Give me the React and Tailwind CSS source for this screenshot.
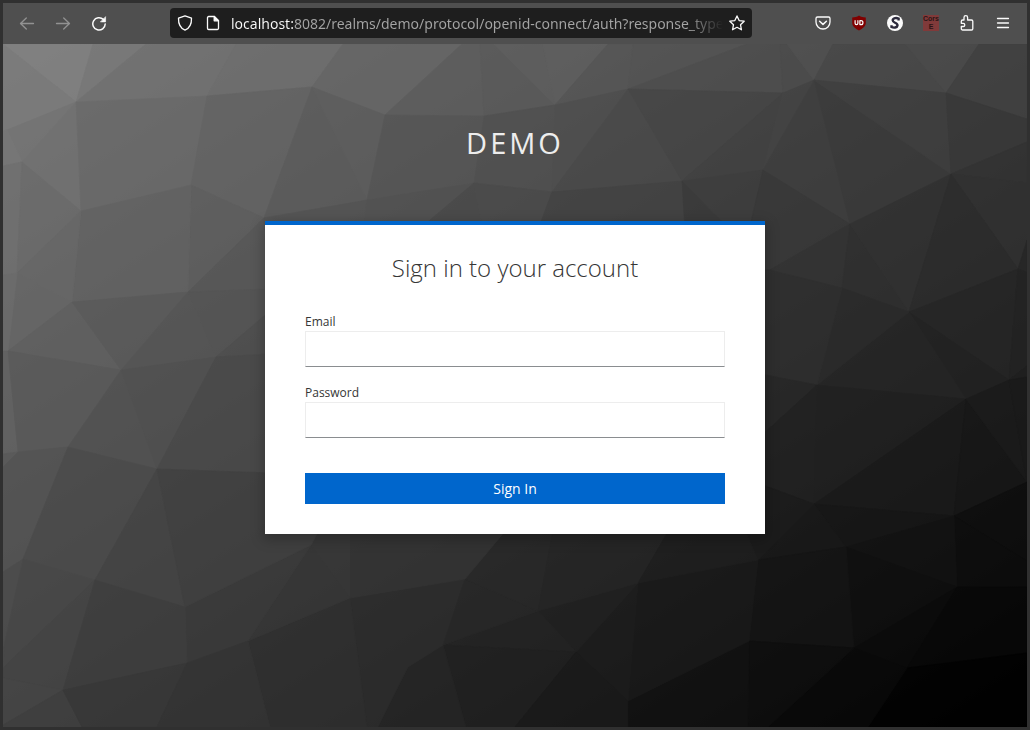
import React, { useState } from "react";

const FACETS = [
  ["3,44 93,44 76,102", "#808080"],
  ["3,44 76,102 7,130 3,131", "#7a7a7a"],
  ["93,44 146,44 76,102", "#787878"],
  ["146,44 236,44 207,96 76,102", "#707070"],
  ["236,44 343,44 312,87 207,96", "#6d6d6d"],
  ["343,44 462,44 385,115 312,87", "#656565"],
  ["462,44 480,44 484,116 385,115", "#5c5c5c"],
  ["480,44 494,44 555,105 484,116", "#595959"],
  ["494,44 543,44 555,105", "#5d5d5d"],
  ["543,44 608,44 555,105", "#5e5e5e"],
  ["608,44 633,44 628,89 555,105", "#555555"],
  ["633,44 747,44 628,89", "#535353"],
  ["747,44 780,44 783,93 628,89", "#4d4d4d"],
  ["780,44 787,44 814,80 783,93", "#4b4b4b"],
  ["787,44 833,44 814,80", "#505050"],
  ["833,44 905,44 946,93 814,80", "#484848"],
  ["905,44 979,44 946,93", "#4b4b4b"],
  ["979,44 1027,44 1027,119 946,93", "#414141"],
  ["7,130 76,102 22,162", "#737373"],
  ["3,131 7,130 22,162 3,166", "#767676"],
  ["76,102 81,211 22,162", "#707070"],
  ["3,166 22,162 17,273 3,275", "#6f6f6f"],
  ["22,162 81,211 17,273", "#6a6a6a"],
  ["76,102 207,96 191,185 81,211", "#686868"],
  ["207,96 312,87 264,218 191,185", "#626262"],
  ["312,87 385,115 367,200", "#5c5c5c"],
  ["312,87 367,200 264,218", "#5a5a5a"],
  ["385,115 484,116 474,183 367,200", "#545454"],
  ["484,116 555,105 552,192 474,183", "#4f4f4f"],
  ["555,105 628,89 552,192", "#4d4d4d"],
  ["628,89 682,181 552,192", "#484848"],
  ["628,89 783,93 682,181", "#444444"],
  ["783,93 763,170 682,181", "#404040"],
  ["783,93 814,80 763,170", "#424242"],
  ["814,80 850,224 763,170", "#3d3d3d"],
  ["814,80 951,174 850,224", "#393939"],
  ["814,80 946,93 951,174", "#3e3e3e"],
  ["946,93 1027,119 1027,142 951,174", "#383838"],
  ["951,174 1027,142 1027,183", "#323232"],
  ["951,174 1027,183 1027,240 1018,269", "#303030"],
  ["191,185 264,218 188,292", "#5d5d5d"],
  ["81,211 191,185 188,292 72,302", "#616161"],
  ["81,211 72,302 17,273", "#666666"],
  ["17,273 72,302 8,351", "#656565"],
  ["3,275 17,273 8,351 3,351", "#6b6b6b"],
  ["264,218 300,218 300,289 188,292", "#565656"],
  ["264,218 367,200 363,230 264,230", "#525252"],
  ["367,200 474,183 418,230 363,230", "#505050"],
  ["474,183 418,230 483,230", "#484848"],
  ["474,183 552,192 538,230 483,230", "#494949"],
  ["552,192 682,181 685,230 538,230", "#414141"],
  ["682,181 763,170 766,230 730,230", "#3c3c3c"],
  ["682,181 730,230 685,230", "#383838"],
  ["763,170 850,224 770,270 740,270", "#373737"],
  ["850,224 842,288 770,270", "#323232"],
  ["850,224 909,312 842,288", "#2e2e2e"],
  ["850,224 951,174 909,312", "#303030"],
  ["951,174 1018,269 909,312", "#2b2b2b"],
  ["1018,269 1027,240 1027,272", "#262626"],
  ["1018,269 1009,380 909,312", "#252525"],
  ["1018,269 1027,272 1027,366 1009,380", "#222222"],
  ["1009,380 1027,366 1027,377", "#1f1f1f"],
  ["909,312 1009,380 966,399", "#212121"],
  ["909,312 966,399 817,385", "#242424"],
  ["842,288 909,312 817,385", "#292929"],
  ["760,270 770,270 842,288 817,385 760,374", "#2d2d2d"],
  ["760,374 817,385 760,437", "#262626"],
  ["817,385 814,504 760,484 760,437", "#202020"],
  ["817,385 966,399 814,504", "#1f1f1f"],
  ["966,399 954,516 814,504", "#191919"],
  ["966,399 1027,482 954,516", "#161616"],
  ["966,399 1009,380 1027,482", "#1a1a1a"],
  ["1009,380 1027,377 1027,482", "#191919"],
  ["1027,482 1027,561 954,516", "#0d0d0d"],
  ["1027,561 1027,587 957,587 954,516", "#0c0c0c"],
  ["814,504 954,516 846,547", "#151515"],
  ["814,504 846,547 758,560", "#171717"],
  ["760,484 814,504 758,560 745,530", "#1a1a1a"],
  ["846,547 954,516 957,587", "#111111"],
  ["846,547 957,587 854,648", "#0e0e0e"],
  ["758,560 846,547 854,648 749,641", "#131313"],
  ["957,587 907,668 854,648", "#0a0a0a"],
  ["957,587 1027,587 1027,653 907,668", "#070707"],
  ["907,668 1027,653 1027,727 868,727", "#010101"],
  ["854,648 907,668 868,727 768,727", "#080808"],
  ["749,641 854,648 768,727 748,727", "#0d0d0d"],
  ["628,701 749,641 748,727 628,727", "#101010"],
  ["638,583 758,560 749,641 628,701", "#181818"],
  ["638,583 628,701 576,652", "#1b1b1b"],
  ["538,611 638,583 576,652", "#1f1f1f"],
  ["443,645 538,611 576,652", "#222222"],
  ["443,645 576,652 515,727 466,727", "#1f1f1f"],
  ["576,652 628,701 628,727 515,727", "#191919"],
  ["408,667 443,645 466,727 378,727", "#242424"],
  ["350,598 465,579 443,645 408,667 378,727 367,727", "#2b2b2b"],
  ["248,641 350,598 367,727 270,727", "#2e2e2e"],
  ["465,579 538,611 443,645", "#262626"],
  ["465,579 506,530 553,530 538,611", "#272727"],
  ["553,530 669,530 638,583 538,611", "#242424"],
  ["669,530 745,530 758,560 638,583", "#1d1d1d"],
  ["350,530 506,530 465,579 350,598", "#323232"],
  ["319,530 350,530 350,598 311,545", "#363636"],
  ["311,545 350,598 248,641", "#353535"],
  ["185,607 311,545 248,641 187,663", "#393939"],
  ["8,351 3,351 3,454 18,452", "#626262"],
  ["8,351 72,302 121,370", "#5f5f5f"],
  ["72,302 188,292 121,370", "#595959"],
  ["188,292 216,357 121,370", "#545454"],
  ["188,292 270,289 270,311 216,357", "#535353"],
  ["216,357 270,311 270,354", "#4d4d4d"],
  ["8,351 121,370 68,447 18,452", "#595959"],
  ["121,370 157,469 68,447", "#515151"],
  ["121,370 216,357 157,469", "#4f4f4f"],
  ["216,357 270,354 270,473 157,469", "#484848"],
  ["3,454 18,452 3,467", "#5a5a5a"],
  ["3,467 18,452 68,447 23,559 3,572", "#535353"],
  ["68,447 157,469 95,580 23,559", "#4a4a4a"],
  ["157,469 185,607 95,580", "#434343"],
  ["157,469 270,473 319,530 311,545 185,607", "#3f3f3f"],
  ["3,572 23,559 4,646 3,650", "#4c4c4c"],
  ["23,559 95,580 3,668 4,646", "#474747"],
  ["95,580 63,690 3,678 3,668", "#444444"],
  ["3,678 63,690 3,725", "#454545"],
  ["3,725 63,690 82,727 3,727", "#3f3f3f"],
  ["95,580 185,607 187,663 63,690", "#3d3d3d"],
  ["63,690 187,663 157,727 82,727", "#373737"],
  ["187,663 248,641 270,727 157,727", "#333333"],
];

function Backdrop() {
  return (
    <svg
      className="absolute inset-0 h-full w-full"
      viewBox="3 44 1024 683"
      preserveAspectRatio="none"
      aria-hidden="true"
    >
      <defs>
        <linearGradient id="shade" x1="0" y1="0" x2="1" y2="1">
          <stop offset="0" stopColor="#848484" />
          <stop offset="1" stopColor="#000000" />
        </linearGradient>
      </defs>
      <rect x="3" y="44" width="1024" height="683" fill="url(#shade)" />
      <g opacity="0.8">
        {FACETS.map(([points, fill]) => (
          <polygon
            key={points}
            points={points}
            fill={fill}
            stroke={fill}
            strokeWidth="0.7"
            strokeLinejoin="round"
          />
        ))}
      </g>
    </svg>
  );
}

function Icon({ children, className = "" }) {
  return (
    <svg
      viewBox="0 0 16 16"
      className={"block size-4 " + className}
      fill="none"
      stroke="currentColor"
      strokeWidth="1.3"
      strokeLinecap="round"
      strokeLinejoin="round"
      aria-hidden="true"
    >
      {children}
    </svg>
  );
}

function ToolButton({ label, className = "", children }) {
  return (
    <button
      type="button"
      aria-label={label}
      className={"flex size-9 shrink-0 items-center justify-center " + className}
    >
      {children}
    </button>
  );
}

function Toolbar() {
  return (
    <header className="flex h-[41px] shrink-0 items-center bg-[#4f4f4f] px-1.5 pb-px text-[#fbfbfb]">
      <nav className="flex items-center" aria-label="History">
        <ToolButton label="Back" className="text-[#929292]">
          <Icon>
            <path d="M14.5 8.5H1.8M7.3 3 1.5 8.5 7.3 14" />
          </Icon>
        </ToolButton>
        <ToolButton label="Forward" className="text-[#929292]">
          <Icon>
            <path d="M1.5 8.5h12.7M8.7 3l5.8 5.5L8.7 14" />
          </Icon>
        </ToolButton>
        <ToolButton label="Reload">
          <Icon>
            <path d="M12.3 4.4A6.2 6.2 0 1 0 14.200 9" strokeWidth="1.5" />
            <path d="M14.6 2v4.9H9.7z" fill="currentColor" strokeWidth="0.6" />
          </Icon>
        </ToolButton>
      </nav>

      <div className="ml-[53px] mr-[53px] flex h-[30px] min-w-0 flex-1 items-center rounded-sm bg-[#1e1e1e] px-[7px]">
        <Icon className="shrink-0">
          <path d="M8 .8 14.5 3.2C14.7 9 12.4 13.2 8 15.2 3.6 13.2 1.3 9 1.5 3.2z" />
        </Icon>
        <Icon className="ml-3 shrink-0">
          <path d="M9.3 1.5H3.7a1.200 1.200 0 0 0-1.200 1.200v10.600a1.200 1.200 0 0 0 1.200 1.200h8.600a1.200 1.200 0 0 0 1.200-1.200V5.700z" />
          <path d="M9.200 1.500v4.300h4.300z" fill="currentColor" />
        </Icon>
        <input
          type="text"
          readOnly
          aria-label="Address"
          value="localhost:8082/realms/demo/protocol/openid-connect/auth?response_type"
          className="ml-2.5 h-[30px] min-w-0 flex-1 bg-[linear-gradient(to_right,#fbfbfb_62px,#a5a5a5_62px,#a5a5a5_calc(100%-36px),#1e1e1e_100%)] bg-clip-text font-['Noto_Sans',sans-serif] text-[14px] text-transparent outline-none"
        />
        <button type="button" aria-label="Bookmark this page" className="ml-1.5 shrink-0">
          <Icon>
            <path d="m8 .9 2.150 4.700 5.050.6-3.700 3.500.95 5.100L8 12.300l-4.450 2.500.95-5.100L.8 6.200l5.050-.6z" />
          </Icon>
        </button>
      </div>

      <div className="flex items-center">
        <ToolButton label="Save to Pocket">
          <Icon>
            <path d="M2.500 2h11A1.500 1.500 0 0 1 15 3.500V7a7 7 0 0 1-14 0V3.500A1.500 1.500 0 0 1 2.500 2z" />
            <path d="m4.600 6.200 3.400 3.200 3.400-3.200" strokeWidth="1.500" />
          </Icon>
        </ToolButton>
        <ToolButton label="uBlock Origin">
          <Icon>
            <path
              d="M8 .6c2 1.400 4.400 1.900 6.800 1.900v5.300c0 3.600-3 5.800-6.800 7.600C4.200 13.600 1.200 11.400 1.200 7.800V2.500C3.600 2.500 6 2 8 .6z"
              fill="#800000"
              stroke="none"
            />
            <path d="M4.100 5.700v2.500a1.400 1.400 0 0 0 2.800 0V5.700" strokeWidth="1.200" />
            <path d="M8.900 5.700h1.100a1.950 1.950 0 0 1 0 3.900H8.900z" strokeWidth="1.200" />
          </Icon>
        </ToolButton>
        <ToolButton label="Stylus">
          <Icon>
            <circle cx="8" cy="8" r="8" fill="#fbfbfb" stroke="none" />
            <path
              d="M11.600 5.500V3.600C9.500 2.700 5.800 2.800 5.700 5.400c-.1 2.500 5.100 2.300 4.800 5.100-.3 2.400-4 2.500-6 1.500v-1.800"
              stroke="#2c2a3c"
              strokeWidth="2.400"
              strokeLinecap="butt"
              strokeLinejoin="miter"
            />
          </Icon>
        </ToolButton>
        <ToolButton label="CORS Everywhere">
          <span className="flex size-4 flex-col items-center justify-center bg-[#803a3a] font-['Liberation_Sans',sans-serif] text-[7px] font-bold leading-[8px] text-[#2b1515]">
            <span>Cors</span>
            <span>E</span>
          </span>
        </ToolButton>
        <ToolButton label="Extensions">
          <Icon>
            <path d="M5 5V2.500a1.800 1.800 0 0 1 3.600 0V5h3.900a1.300 1.300 0 0 1 1.300 1.300v7.400a1.300 1.300 0 0 1-1.300 1.300H3.600a1.300 1.300 0 0 1-1.300-1.300v-2.200h1.900a1.600 1.600 0 0 0 0-3.200H2.300V6.300A1.300 1.300 0 0 1 3.600 5z" />
          </Icon>
        </ToolButton>
        <ToolButton label="Open application menu">
          <Icon>
            <path d="M2.500 3.500h11M2.500 8h11M2.500 12.500h11" />
          </Icon>
        </ToolButton>
      </div>
    </header>
  );
}

function Field({ id, label, type, value, onChange }) {
  return (
    <div>
      <label htmlFor={id} className="block text-[12px] leading-[18px] text-[#363636]">
        {label}
      </label>
      <input
        id={id}
        type={type}
        value={value}
        onChange={(e) => onChange(e.target.value)}
        className="block h-9 w-full border border-[#ededed] border-b-[#8a8d90] bg-white px-2 text-sm outline-none"
      />
    </div>
  );
}

export default function App() {
  const [email, setEmail] = useState("");
  const [password, setPassword] = useState("");

  return (
    <div className="flex min-h-screen flex-col border-[3px] border-[#303030] bg-[#2b2b2b] font-['Open_Sans',sans-serif]">
      <Toolbar />
      <main className="relative flex flex-1 flex-col items-center overflow-hidden">
        <Backdrop />
        <div className="relative w-full max-w-[500px] pt-[81px]">
          <div className="text-center text-[29px] leading-[35px] tracking-[3px] text-[#ededed]">DEMO</div>
          <form
            onSubmit={(e) => e.preventDefault()}
            className="mt-[61px] border-t-4 border-[#0066cc] bg-white px-10 pb-[30px] pt-[27px] shadow-[0_4px_12px_2px_rgba(3,3,3,0.22)]"
          >
            <h1 className="text-center text-2xl font-light text-[#363636]">Sign in to your account</h1>
            <div className="mt-[29px] flex flex-col gap-[17px]">
              <Field id="email" label="Email" type="email" value={email} onChange={setEmail} />
              <Field id="password" label="Password" type="password" value={password} onChange={setPassword} />
            </div>
            <button
              type="submit"
              className="mt-[35px] block h-[31px] w-full bg-[#0066cc] text-sm text-white"
            >
              Sign In
            </button>
          </form>
        </div>
      </main>
    </div>
  );
}
